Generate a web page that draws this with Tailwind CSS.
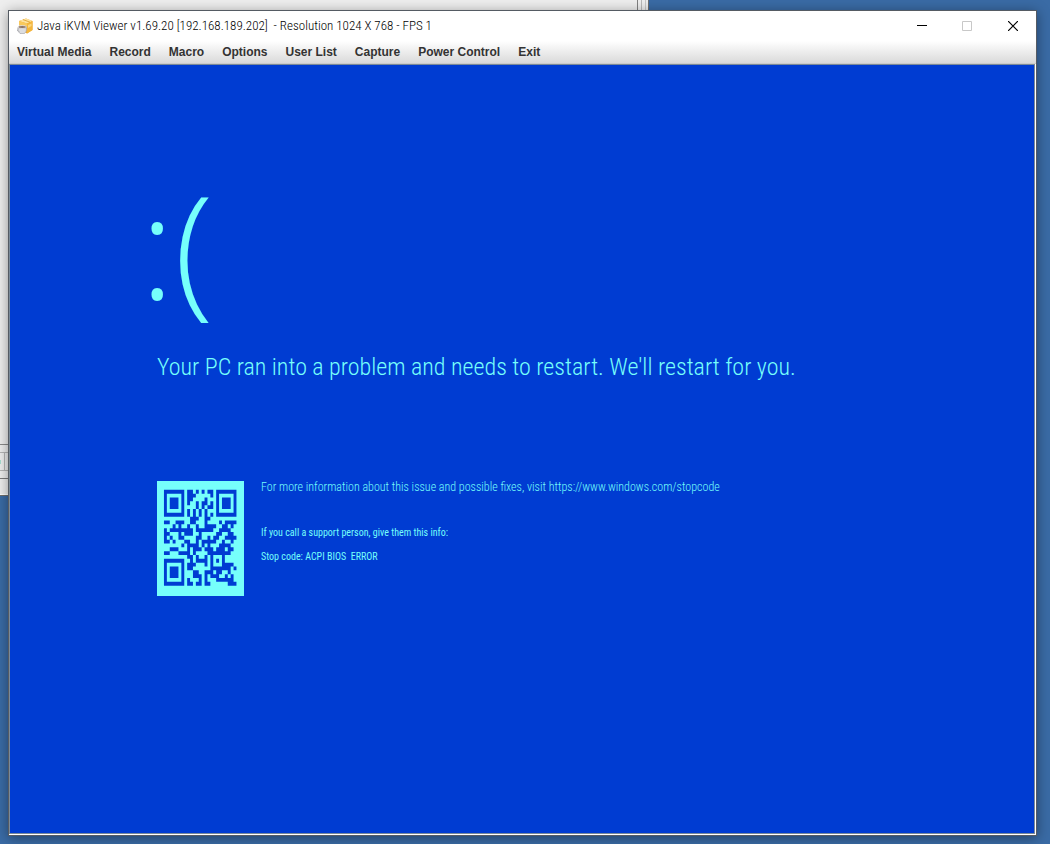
<!DOCTYPE html>
<html lang="en">
<head>
  <meta charset="UTF-8" />
  <meta name="viewport" content="width=device-width, initial-scale=1.0"/>
  <title>Java iKVM Viewer</title>
  <script src="https://cdn.jsdelivr.net/npm/@tailwindcss/browser@4"></script>
</head>
<body class="relative h-screen overflow-hidden bg-[#3a6ba5] font-['Liberation_Sans',Arial,sans-serif]">
  <!-- window behind the viewer -->
  <div class="absolute left-0 top-0 w-[649px] h-[496px] flex flex-col bg-[#eeeeee] border-r border-b border-[#6e6e6e]">
    <div class="flex-1 flex border-b border-[#8a8a8a]">
      <div class="flex-1 border-r border-[#808080] bg-[#eeeeee]"></div>
      <div class="w-1 border-r border-[#b8b8b8]"></div>
      <div class="w-1 border-r border-[#c8c8c8]"></div>
      <div class="w-0.5"></div>
    </div>
    <div class="h-2 border-b border-[#b5b5b5]"></div>
    <div class="h-[18px] flex items-center border-b border-[#b5b5b5]">
      <div class="w-px h-1 bg-[#a8ded2]"></div>
      <div class="w-1 h-full border-r border-[#b5b5b5]"></div>
    </div>
    <div class="h-2 border-b border-[#7a7a7a]"></div>
    <div class="h-4 border-b border-white"></div>
  </div>

  <div class="relative h-full pt-2.5 pl-2 pr-[13px] pb-2">
    <main class="h-full flex flex-col bg-white border border-[#555b63] shadow-[0_2px_12px_rgba(0,0,0,0.4)]">
      <header class="h-[30px] shrink-0 flex items-center pl-2 text-black">
        <svg class="w-4 h-4 shrink-0" viewBox="0 0 16 16" aria-hidden="true">
          <path d="M2 3L9 0.500L15.500 3V12L10 15.500L3 12Z" fill="#f0a830"/>
          <path d="M2 3L9 0.500L15.500 3L10 5.500Z" fill="#fde3a0"/>
          <path d="M10 5.500L15.500 3V12L10 15.500Z" fill="#f4b63c"/>
          <path d="M11 7L14.500 5.500V8L11 10Z" fill="#fbd67e"/>
          <path d="M2 3L10 5.500V9L2 8Z" fill="#f9c95c"/>
          <path d="M6 1.600L13 4.200" stroke="#d99a2b" stroke-width="0.800"/>
          <path d="M1 9H9.500Q10 14 7.500 15.500H3Q0.500 14 1 9Z" fill="#dcdde0" stroke="#a0a0a4" stroke-width="0.600"/>
          <ellipse cx="5.200" cy="9" rx="4.200" ry="1.500" fill="#8b7262" stroke="#e9e9eb" stroke-width="0.800"/>
          <path d="M1.200 10.500Q-0.800 11 0.700 13Q1.500 14 2.500 13.500" fill="none" stroke="#b4b4b8"/>
        </svg>
        <h1 class="ml-1 flex-1 whitespace-pre font-['Roboto_Condensed','Roboto',sans-serif] font-light text-[13px]">Java iKVM Viewer v1.69.20 [192.168.189.202]  - Resolution 1024 X 768 - FPS 1</h1>
        <button type="button" aria-label="Minimize" class="w-[45px] h-full flex items-center justify-center">
          <svg class="w-2.5 h-2.5" viewBox="0 0 10 10"><path d="M0 4.500H10" stroke="#000"/></svg>
        </button>
        <button type="button" aria-label="Maximize" disabled class="w-[46px] h-full flex items-center justify-center">
          <svg class="w-2.5 h-2.5" viewBox="0 0 10 10"><path d="M0.500 0.500H9.500V9.500H0.500Z" fill="none" stroke="#c8c8c8"/></svg>
        </button>
        <button type="button" aria-label="Close" class="w-[46px] h-full flex items-center justify-center">
          <svg class="w-2.5 h-2.5" viewBox="0 0 10 10"><path d="M0 0L10 10M10 0L0 10" stroke="#000" stroke-width="1.200"/></svg>
        </button>
      </header>
      <nav class="h-[22px] shrink-0 flex items-center gap-[18px] pl-2 text-xs font-bold text-[#333333] whitespace-nowrap bg-linear-to-b from-white to-[#dadada]">
        <button type="button">Virtual Media</button>
        <button type="button">Record</button>
        <button type="button">Macro</button>
        <button type="button">Options</button>
        <button type="button">User List</button>
        <button type="button">Capture</button>
        <button type="button">Power Control</button>
        <button type="button">Exit</button>
      </nav>
      <section class="flex-1 min-h-0 flex flex-col border-t border-[#cccccc] pr-px pb-px">
        <div class="flex-1 border border-[#7a8a99] bg-[#003cd2] text-[#76fffb] pl-[130px] font-['Roboto_Condensed','Roboto',sans-serif] font-light whitespace-nowrap">
          <p class="mt-[86px] h-[186px] leading-[186px] text-[144px] font-['Open_Sans','Noto_Sans',sans-serif]">:(</p>
          <h2 class="ml-[17px] mt-3 text-2xl leading-9">Your PC ran into a problem and needs to restart. We'll restart for you.</h2>
          <div class="ml-[17px] mt-24 flex gap-[17px]">
            <svg id="qr" class="w-[87px] h-[115px] shrink-0 bg-[#76fffb]" viewBox="-2.400 -2.300 30 30" preserveAspectRatio="none" role="img" aria-label="QR code">
              <path fill="#003cd2"/>
            </svg>
            <div class="text-[10px] leading-6 font-normal">
              <p class="-mt-1.5 mb-[22px] text-xs leading-6 font-light">For more information about this issue and possible fixes, visit https://www.windows.com/stopcode</p>
              <p>If you call a support person, give them this info:</p>
              <p class="whitespace-pre">Stop code: ACPI BIOS  ERROR</p>
            </div>
          </div>
        </div>
      </section>
    </main>
  </div>

  <script>
    // version 2-L QR code, 32 byte payload
    const size = 25;
    const mask = 4;
    const text = 'https://www.windows.com/stopcode';
    const grid = Array.from({ length: size }, () => Array(size).fill(null));

    const finder = (r0, c0) => {
      for (let r = -1; r < 8; r++) {
        for (let c = -1; c < 8; c++) {
          if (r0 + r < 0 || r0 + r >= size || c0 + c < 0 || c0 + c >= size) continue;
          const d = Math.max(Math.abs(r - 3), Math.abs(c - 3));
          grid[r0 + r][c0 + c] = d !== 2 && d !== 4;
        }
      }
    };
    finder(0, 0);
    finder(0, 18);
    finder(18, 0);
    for (let i = 8; i < 17; i++) grid[6][i] = grid[i][6] = i % 2 === 0;
    for (let r = -2; r < 3; r++) {
      for (let c = -2; c < 3; c++) grid[18 + r][18 + c] = Math.max(Math.abs(r), Math.abs(c)) !== 1;
    }

    // format bits
    let rem = 8 | mask;
    for (let i = 0; i < 10; i++) rem = (rem << 1) ^ ((rem >> 9) * 0x537);
    const format = ((8 | mask) << 10 | rem) ^ 0x5412;
    const bit = i => (format >> i & 1) === 1;
    for (let i = 0; i < 6; i++) grid[i][8] = bit(i);
    grid[7][8] = bit(6);
    grid[8][8] = bit(7);
    grid[8][7] = bit(8);
    for (let i = 9; i < 15; i++) grid[8][14 - i] = bit(i);
    for (let i = 0; i < 8; i++) grid[8][size - 1 - i] = bit(i);
    for (let i = 8; i < 15; i++) grid[size - 15 + i][8] = bit(i);
    grid[17][8] = true;

    // data and error correction
    const toBits = n => n.toString(2).padStart(8, '0');
    const bits = '0100' + toBits(text.length) + [...text].map(ch => toBits(ch.charCodeAt(0))).join('') + '0000';
    const data = bits.match(/.{8}/g).map(b => parseInt(b, 2));
    const mul = (x, y) => {
      let z = 0;
      for (let i = 7; i >= 0; i--) {
        z = (z << 1) ^ ((z >> 7) * 0x11d);
        z ^= (y >> i & 1) * x;
      }
      return z;
    };
    const gen = Array(10).fill(0);
    gen[9] = 1;
    let root = 1;
    for (let i = 0; i < 10; i++) {
      for (let j = 0; j < 10; j++) {
        gen[j] = mul(gen[j], root);
        if (j < 9) gen[j] ^= gen[j + 1];
      }
      root = mul(root, 2);
    }
    const ecc = Array(10).fill(0);
    for (const b of data) {
      const f = b ^ ecc.shift();
      ecc.push(0);
      gen.forEach((g, i) => ecc[i] ^= mul(g, f));
    }

    const all = data.concat(ecc);
    let n = 0;
    for (let right = size - 1; right > 0; right -= 2) {
      if (right === 6) right = 5;
      for (let v = 0; v < size; v++) {
        for (let j = 0; j < 2; j++) {
          const c = right - j;
          const r = ((right + 1) & 2) === 0 ? size - 1 - v : v;
          if (grid[r][c] !== null) continue;
          const on = n < 352 && (all[n >> 3] >> (7 - (n & 7)) & 1) === 1;
          n++;
          grid[r][c] = on !== (((r >> 1) + Math.floor(c / 3)) % 2 === 0);
        }
      }
    }

    let d = '';
    grid.forEach((row, r) => row.forEach((on, c) => { if (on) d += `M${c} ${r}h1v1h-1z`; }));
    document.querySelector('#qr path').setAttribute('d', d);
  </script>
</body>
</html>
